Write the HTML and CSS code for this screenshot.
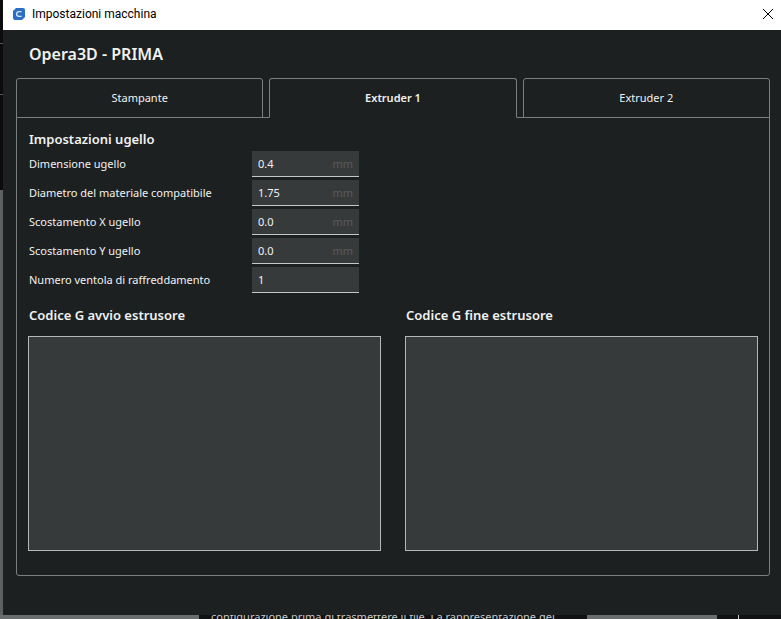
FILE: index.html
```
<!DOCTYPE html>
<html lang="it">
    <head>
        <meta charset="utf-8">
        <title>Impostazioni macchina</title>
        <link rel="stylesheet" href="styles.css">
    </head>
    <body>
        <div class="edge"></div>
        <main class="window">
            <header class="titlebar">
                <svg class="logo" viewBox="0 0 12 12" aria-hidden="true">
                    <path fill="#2b6fc4" d="M3 0h9v9l-3 3H0V3z"/>
                    <path fill="none" stroke="#d5e8fb" stroke-width="1.3" d="M8.6 3.6H6A2.4 2.4 0 0 0 6 8.4h2.6"/>
                </svg>
                <span class="caption">Impostazioni macchina</span>
                <button class="close" type="button" aria-label="Chiudi">
                    <svg viewBox="0 0 10 10"><path d="M0 0l10 10M10 0L0 10"/></svg>
                </button>
            </header>

            <h1>Opera3D - PRIMA</h1>

            <div class="tabs" role="tablist">
                <button class="tab" type="button" role="tab">Stampante</button>
                <button class="tab active" type="button" role="tab" aria-selected="true">Extruder 1</button>
                <button class="tab" type="button" role="tab">Extruder 2</button>
            </div>

            <form class="panel">
                <h2>Impostazioni ugello</h2>
                <div class="fields">
                    <label for="size">Dimensione ugello</label>
                    <div class="field"><input id="size" type="text" value="0.4"><span class="unit">mm</span></div>
                    <label for="diameter">Diametro del materiale compatibile</label>
                    <div class="field"><input id="diameter" type="text" value="1.75"><span class="unit">mm</span></div>
                    <label for="offset_x">Scostamento X ugello</label>
                    <div class="field"><input id="offset_x" type="text" value="0.0"><span class="unit">mm</span></div>
                    <label for="offset_y">Scostamento Y ugello</label>
                    <div class="field"><input id="offset_y" type="text" value="0.0"><span class="unit">mm</span></div>
                    <label for="fan">Numero ventola di raffreddamento</label>
                    <div class="field"><input id="fan" type="text" value="1"></div>
                </div>

                <div class="gcode">
                    <div class="code">
                        <label for="start">Codice G avvio estrusore</label>
                        <textarea id="start"></textarea>
                    </div>
                    <div class="code">
                        <label for="end">Codice G fine estrusore</label>
                        <textarea id="end"></textarea>
                    </div>
                </div>
            </form>
        </main>
        <div class="behind">
            <div class="grey wide"></div>
            <div class="page">configurazione prima di trasmettere il file. La rappresentazione del</div>
            <div class="grey"></div>
            <div class="rest"></div>
        </div>
    </body>
</html>
```

FILE: styles.css
```
* {
    box-sizing: border-box;
}

body {
    margin: 0;
    height: 100vh;
    display: grid;
    grid-template-columns: 3px 1fr;
    grid-template-rows: 1fr 4px;
    overflow: hidden;
    background: #101214;
    color: #f0f2f2;
    font-family: "Noto Sans", sans-serif;
    font-size: 11px;
}

button, input, textarea {
    margin: 0;
    border: 0;
    color: inherit;
    font: inherit;
}

.edge {
    background:
        linear-gradient(#55585a, #55585a) 0 43px / 100% 1px no-repeat,
        linear-gradient(#55585a, #55585a) 0 94px / 100% 1px no-repeat,
        linear-gradient(#0b0b0d 190px, #5d6061 190px);
}

.window {
    display: flex;
    flex-direction: column;
    background: #1d2021;
}

.titlebar {
    display: flex;
    align-items: center;
    height: 30px;
    padding: 0 8px 2px 10px;
    background: #fff;
    color: #000;
    font-family: Roboto, sans-serif;
    font-size: 12px;
}

.logo {
    width: 12px;
    height: 12px;
    margin-right: 7px;
    border-radius: 2px;
}

.caption {
    flex: 1;
}

.close {
    display: flex;
    padding: 0;
    background: none;
}

.close svg {
    width: 10px;
    height: 10px;
    overflow: visible;
    stroke: #000;
}

h1 {
    margin: 12px 26px;
    font-size: 16px;
    font-weight: 600;
    line-height: 24px;
}

.tabs {
    display: flex;
    gap: 6px;
    margin: 0 11px -1px 13px;
}

.tab {
    flex: 1;
    height: 40px;
    padding-bottom: 3px;
    border: 1px solid #7b7f7f;
    border-radius: 3px 3px 0 0;
    background: #1d2021;
}

.tab.active {
    position: relative;
    border-bottom-color: #1d2021;
    font-weight: 600;
}

.panel {
    flex: 1;
    display: flex;
    flex-direction: column;
    margin: 0 11px 39px 13px;
    padding: 12px 11px 24px;
    border: 1px solid #7b7f7f;
    border-radius: 0 0 3px 3px;
}

h2, .code label {
    margin: 0;
    padding-left: 1px;
    font-size: 13px;
    font-weight: 600;
    line-height: 18px;
}

.fields {
    display: grid;
    grid-template-columns: 221px 107px;
    gap: 3px;
    align-items: center;
    margin-top: 3px;
}

.fields label {
    padding: 0 0 2px 1px;
}

.field {
    display: flex;
    align-items: center;
    height: 26px;
    padding: 0 6px;
    border-bottom: 1px solid #c4c8c8;
    background: #373a3b;
}

.field input {
    flex: 1;
    min-width: 0;
    padding: 0;
    background: none;
}

.unit {
    color: #585b5c;
}

.gcode {
    flex: 1;
    display: flex;
    gap: 24px;
    margin-top: 13px;
}

.code {
    flex: 1;
    display: flex;
    flex-direction: column;
    gap: 12px;
}

.code textarea {
    flex: 1;
    border: 1px solid #b4b8b8;
    background: #373a3b;
    resize: none;
}

.behind {
    grid-column: 1 / 3;
    display: flex;
    overflow: hidden;
}

.grey {
    flex: 0 0 130px;
    background: #6a6d6e;
}

.grey.wide {
    flex-basis: 199px;
}

.page {
    flex: 1;
    padding-left: 12px;
    color: #c8cacb;
    line-height: 4px;
    white-space: nowrap;
}

.rest {
    flex: 0 0 64px;
    background: linear-gradient(#c8cacb, #c8cacb) 21px 0 / 1px 100% no-repeat;
}
```
